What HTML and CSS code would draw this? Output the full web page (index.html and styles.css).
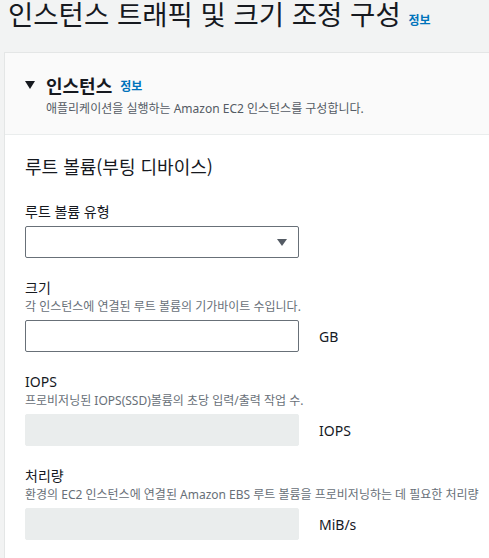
FILE: index.html
```html
<!DOCTYPE html>
<html lang="ko">
<head>
<meta charset="utf-8">
<link rel="stylesheet" href="styles.css">
</head>
<body>
<h1 class="page-title">인스턴스 트래픽 및 크기 조정 구성 <a class="info">정보</a></h1>
<section class="card">
  <div class="card-header">
    <div class="card-title-row">
      <span class="caret"></span>
      <h2 class="card-title">인스턴스</h2>
      <a class="info">정보</a>
    </div>
    <p class="card-desc">애플리케이션을 실행하는 Amazon EC2 인스턴스를 구성합니다.</p>
  </div>
  <div class="card-body">
    <h3 class="sub-title">루트 볼륨(부팅 디바이스)</h3>

    <div class="field">
      <label class="field-label">루트 볼륨 유형</label>
      <div class="control-row">
        <div class="select"><span class="select-arrow"></span></div>
      </div>
    </div>

    <div class="field">
      <label class="field-label">크기</label>
      <p class="field-desc">각 인스턴스에 연결된 루트 볼륨의 기가바이트 수입니다.</p>
      <div class="control-row">
        <div class="input"></div>
        <span class="unit">GB</span>
      </div>
    </div>

    <div class="field">
      <label class="field-label">IOPS</label>
      <p class="field-desc">프로비저닝된 IOPS(SSD)볼륨의 초당 입력/출력 작업 수.</p>
      <div class="control-row">
        <div class="input disabled"></div>
        <span class="unit">IOPS</span>
      </div>
    </div>

    <div class="field">
      <label class="field-label">처리량</label>
      <p class="field-desc nowrap">환경의 EC2 인스턴스에 연결된 Amazon EBS 루트 볼륨을 프로비저닝하는 데 필요한 처리량</p>
      <div class="control-row">
        <div class="input disabled"></div>
        <span class="unit">MiB/s</span>
      </div>
    </div>
  </div>
</section>
</body>
</html>
```
FILE: styles.css
```css
html, body {
  margin: 0;
  padding: 0;
}
body {
  background: #f2f3f3;
  font-family: "Noto Sans", "Noto Sans CJK KR", sans-serif;
  color: #16191f;
  width: 489px;
  height: 558px;
  overflow: hidden;
}
.page-title {
  margin: -4px 0 0 8px;
  font-size: 27.5px;
  font-weight: 400;
  line-height: 34px;
  height: 56px;
  white-space: nowrap;
  font-family: "Noto Sans CJK KR", sans-serif;
}
.info {
  color: #0073bb;
  font-size: 12px;
  font-weight: 700;
  font-family: "Noto Sans CJK KR", sans-serif;
}
.card {
  margin-left: 4px;
  width: 520px;
  background: #ffffff;
  border-left: 1px solid #e4e6e6;
  border-top: 1px solid #e4e6e6;
}
.card-header {
  background: #fafafa;
  border-bottom: 1px solid #eaeded;
  padding: 20px 20px 0 20px;
  height: 61px;
}
.card-title-row {
  display: flex;
  align-items: center;
  gap: 8px;
  height: 24px;
}
.caret {
  width: 0;
  height: 0;
  border-left: 5px solid transparent;
  border-right: 5px solid transparent;
  border-top: 8px solid #16191f;
  margin-right: 3px;
}
.card-title {
  margin: 0;
  font-size: 18px;
  font-weight: 700;
  font-family: "Noto Sans CJK KR", sans-serif;
}
.card-desc {
  margin: 4px 0 0 21px;
  font-size: 12px;
  color: #545b64;
  line-height: 16px;
  height: 16px;
}
.card-body {
  padding: 17px 20px 40px 20px;
}
.sub-title {
  margin: 0 0 22px 0;
  font-size: 18px;
  font-weight: 400;
  line-height: 28px;
  font-family: "Noto Sans CJK KR", sans-serif;
}
.field {
  margin-bottom: 20px;
}
.field-label {
  display: block;
  font-size: 14px;
  line-height: 20px;
  height: 20px;
  margin-bottom: 4px;
}
.field-desc {
  margin: -4px 0 4px 0;
  font-size: 12px;
  line-height: 18px;
  height: 18px;
  color: #687078;
}
.nowrap {
  white-space: nowrap;
}
.control-row {
  display: flex;
  align-items: center;
  gap: 20px;
}
.select, .input {
  box-sizing: border-box;
  width: 274px;
  height: 32px;
  border: 1px solid #687078;
  border-radius: 2px;
  background: #ffffff;
  position: relative;
}
.input.disabled {
  background: #eaeded;
  border-color: #eaeded;
}
.select-arrow {
  position: absolute;
  right: 11px;
  top: 12px;
  width: 0;
  height: 0;
  border-left: 5px solid transparent;
  border-right: 5px solid transparent;
  border-top: 7px solid #545b64;
}
.unit {
  font-size: 14px;
}
```
